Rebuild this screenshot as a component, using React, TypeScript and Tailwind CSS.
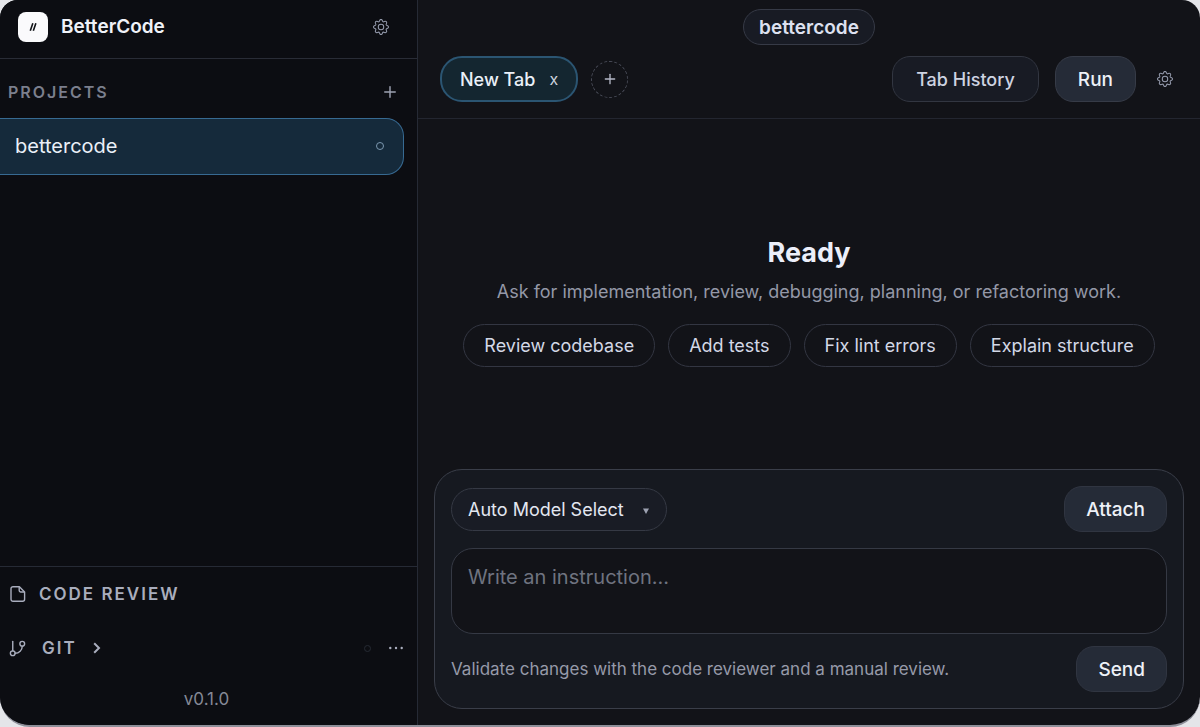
import { useState } from 'react';
import { GitBranch, Plus } from 'lucide-react';
import { BsGear } from 'react-icons/bs';

const suggestions = ['Review codebase', 'Add tests', 'Fix lint errors', 'Explain structure'];

const FileIcon = () => (
  <svg viewBox="0 0 16 18" className="h-[18px] w-4" fill="none" stroke="currentColor" strokeWidth="1.4" strokeLinejoin="round">
    <path d="M3 1.7h6.4l5.2 5.2v7.4a2 2 0 0 1-2 2H3a2 2 0 0 1-2-2V3.7a2 2 0 0 1 2-2z" />
    <path d="M9.2 2v3.6a1.4 1.4 0 0 0 1.4 1.4h3.8" />
  </svg>
);

const Sidebar = () => (
  <aside className="flex w-[418px] shrink-0 flex-col border-r border-[#262a35] bg-[#0c0d12]">
    <div className="flex h-[59px] items-center justify-between border-b border-[#292c36] pr-7 pb-1 pl-[18px]">
      <div className="flex items-center gap-[13px]">
        <div className="flex size-[30px] items-center justify-center rounded-lg bg-[#fafafc]">
          <svg viewBox="0 0 10 12" className="h-2.5 w-2" stroke="#111318" strokeWidth="2">
            <path d="M1.6 10.8 4.8 1.2M5.4 10.8 8.6 1.2" />
          </svg>
        </div>
        <h1 className="text-[19px] leading-7 font-semibold text-[#f0f2f8]">BetterCode</h1>
      </div>
      <button type="button" aria-label="Settings" className="text-[#969cae]">
        <BsGear className="size-4" />
      </button>
    </div>

    <div className="flex h-[59px] items-center justify-between pt-1.5 pr-[18px] pl-2">
      <h2 className="text-base leading-6 font-semibold tracking-[2px] text-[#7b7f8d]">PROJECTS</h2>
      <button type="button" aria-label="Add project" className="text-[#9da2b2]">
        <Plus className="size-[18px]" strokeWidth={1.9} />
      </button>
    </div>

    <button
      type="button"
      className="mr-[13px] flex h-[57px] items-center justify-between rounded-r-[18px] border border-l-0 border-[#376a92] bg-[#152a3b] pr-[19px] pb-0.5 pl-[15px] text-[20px] text-[#eaf0f8]"
    >
      bettercode
      <span className="size-2 rounded-full border border-[#7c98b0]" />
    </button>

    <div className="mt-auto border-t border-[#262a35] text-[#a9adbd]">
      <button type="button" className="flex h-[54px] w-full items-center gap-[13px] pl-2.5">
        <FileIcon />
        <span className="text-[17px] leading-6 font-semibold tracking-[2px]">CODE REVIEW</span>
      </button>
      <div className="flex h-[54px] items-center justify-between pr-3.5 pl-2">
        <button type="button" className="flex items-center">
          <GitBranch className="size-[19px]" strokeWidth={1.8} />
          <span className="pl-[15px] text-[17px] leading-6 font-semibold tracking-[2px]">GIT</span>
          <svg viewBox="0 0 8 12" className="ml-4 h-3 w-2" fill="none" stroke="currentColor" strokeWidth="2">
            <path d="M1.2 1.2 6 6l-4.8 4.8" />
          </svg>
        </button>
        <div className="flex items-center gap-[18px]">
          <span className="size-[7px] rounded-full border border-[#262a33]" />
          <button type="button" aria-label="Git actions">
            <svg viewBox="0 0 14 4" className="h-1 w-3.5" fill="currentColor">
              <circle cx="1.3" cy="2" r="1.2" />
              <circle cx="7" cy="2" r="1.2" />
              <circle cx="12.7" cy="2" r="1.2" />
            </svg>
          </button>
        </div>
      </div>
      <p className="h-[50px] pt-3 pr-1 text-center text-[17px] leading-6 text-[#858997]">v0.1.0</p>
    </div>
  </aside>
);

const Header = () => (
  <header className="flex flex-col border-b border-[#232630] px-[22px] pt-[9px] pb-4">
    <div className="self-center rounded-full border border-[#363a46] bg-[#181b24] px-[15px] pt-[5px] pb-[3px] text-[19px] leading-[26px] font-semibold text-[#dde1f0]">
      bettercode
    </div>
    <div className="mt-[11px] flex items-center justify-between">
      <div className="flex items-center gap-[13px]">
        <div className="flex h-[46px] items-center gap-3.5 rounded-[22px] border-2 border-[#2b5572] bg-[#142630] px-[18px] text-[18px] font-medium text-[#eaf0f8]">
          <button type="button">New Tab</button>
          <button type="button" aria-label="Close tab" className="text-base font-normal text-[#cbd3df]">
            x
          </button>
        </div>
        <button
          type="button"
          aria-label="Add tab"
          className="flex size-[37px] items-center justify-center rounded-full border border-dashed border-[#4a4d59] text-[#b4b8c6]"
        >
          <Plus className="size-4" strokeWidth={2} />
        </button>
      </div>
      <div className="flex items-center gap-4">
        <button type="button" className="h-[46px] rounded-[18px] border border-[#323641] bg-[#181b24] px-[23px] text-[18px] font-medium text-[#ced3e1]">
          Tab History
        </button>
        <button type="button" className="h-[46px] rounded-[18px] border border-[#363b47] bg-[#252b37] px-[22px] pt-0.5 text-[19px] font-medium text-[#eef1f8]">
          Run
        </button>
        <button type="button" aria-label="Run settings" className="px-[5px] text-[#969cae]">
          <BsGear className="size-4" />
        </button>
      </div>
    </div>
  </header>
);

const EmptyState = () => (
  <section className="flex flex-1 flex-col items-center justify-center px-4 pt-3.5 text-center">
    <h2 className="text-[27px] leading-9 font-bold text-[#eceffa]">Ready</h2>
    <p className="mt-[5px] text-[18px] leading-8 text-[#9498a7]">
      Ask for implementation, review, debugging, planning, or refactoring work.
    </p>
    <div className="mt-4 flex flex-wrap justify-center gap-[13px]">
      {suggestions.map((label) => (
        <button
          key={label}
          type="button"
          className="h-[43px] rounded-full border border-[#333642] px-5 text-[18px] text-[#d3d8e6]"
        >
          {label}
        </button>
      ))}
    </div>
  </section>
);

const Composer = () => {
  const [text, setText] = useState('');

  return (
    <form
      className="mx-4 mb-4 rounded-[28px] border border-[#3a3e49] bg-[#161920] p-4"
      onSubmit={(e) => e.preventDefault()}
    >
      <div className="flex items-center justify-between">
        <div className="relative">
          <select
            aria-label="Model"
            className="h-[43px] w-[216px] appearance-none rounded-full border border-[#353944] bg-[#191c25] pr-9 pl-4 text-[18px] text-[#e3e7f1]"
          >
            <option>Auto Model Select</option>
          </select>
          <svg viewBox="0 0 6 6" className="pointer-events-none absolute top-5 right-[18px] size-1.5" fill="#9da2b2">
            <path d="M0 .5h6L3 6z" />
          </svg>
        </div>
        <button type="button" className="h-[46px] rounded-[18px] border border-[#303541] bg-[#252b37] px-[21px] pt-0.5 text-[19px] font-medium text-[#eef1f8]">
          Attach
        </button>
      </div>
      <textarea
        aria-label="Instruction"
        placeholder="Write an instruction..."
        value={text}
        onChange={(e) => setText(e.target.value)}
        className="mt-4 block h-[86px] w-full resize-none rounded-[22px] border border-[#353944] bg-[#121318] px-4 py-[13px] text-[20px] leading-[30px] text-[#dfe3ee] placeholder:text-[#6f7380]"
      />
      <div className="mt-3 flex items-center justify-between">
        <p className="text-[17px] leading-6 text-[#969aa9]">Validate changes with the code reviewer and a manual review.</p>
        <button type="submit" className="h-[46px] rounded-[18px] border border-[#303541] bg-[#252b37] px-[21px] pt-0.5 text-[19px] font-medium text-[#eef1f8]">
          Send
        </button>
      </div>
    </form>
  );
};

export default function App() {
  return (
    <div className="flex min-h-screen bg-[#e4e5e9] font-['Inter',sans-serif]">
      <div className="flex flex-1 overflow-hidden rounded-t-[18px] rounded-b-[30px] border-b-2 border-[#8e8f99] bg-[#121318]">
        <Sidebar />
        <main className="flex min-w-0 flex-1 flex-col">
          <Header />
          <EmptyState />
          <Composer />
        </main>
      </div>
    </div>
  );
}
